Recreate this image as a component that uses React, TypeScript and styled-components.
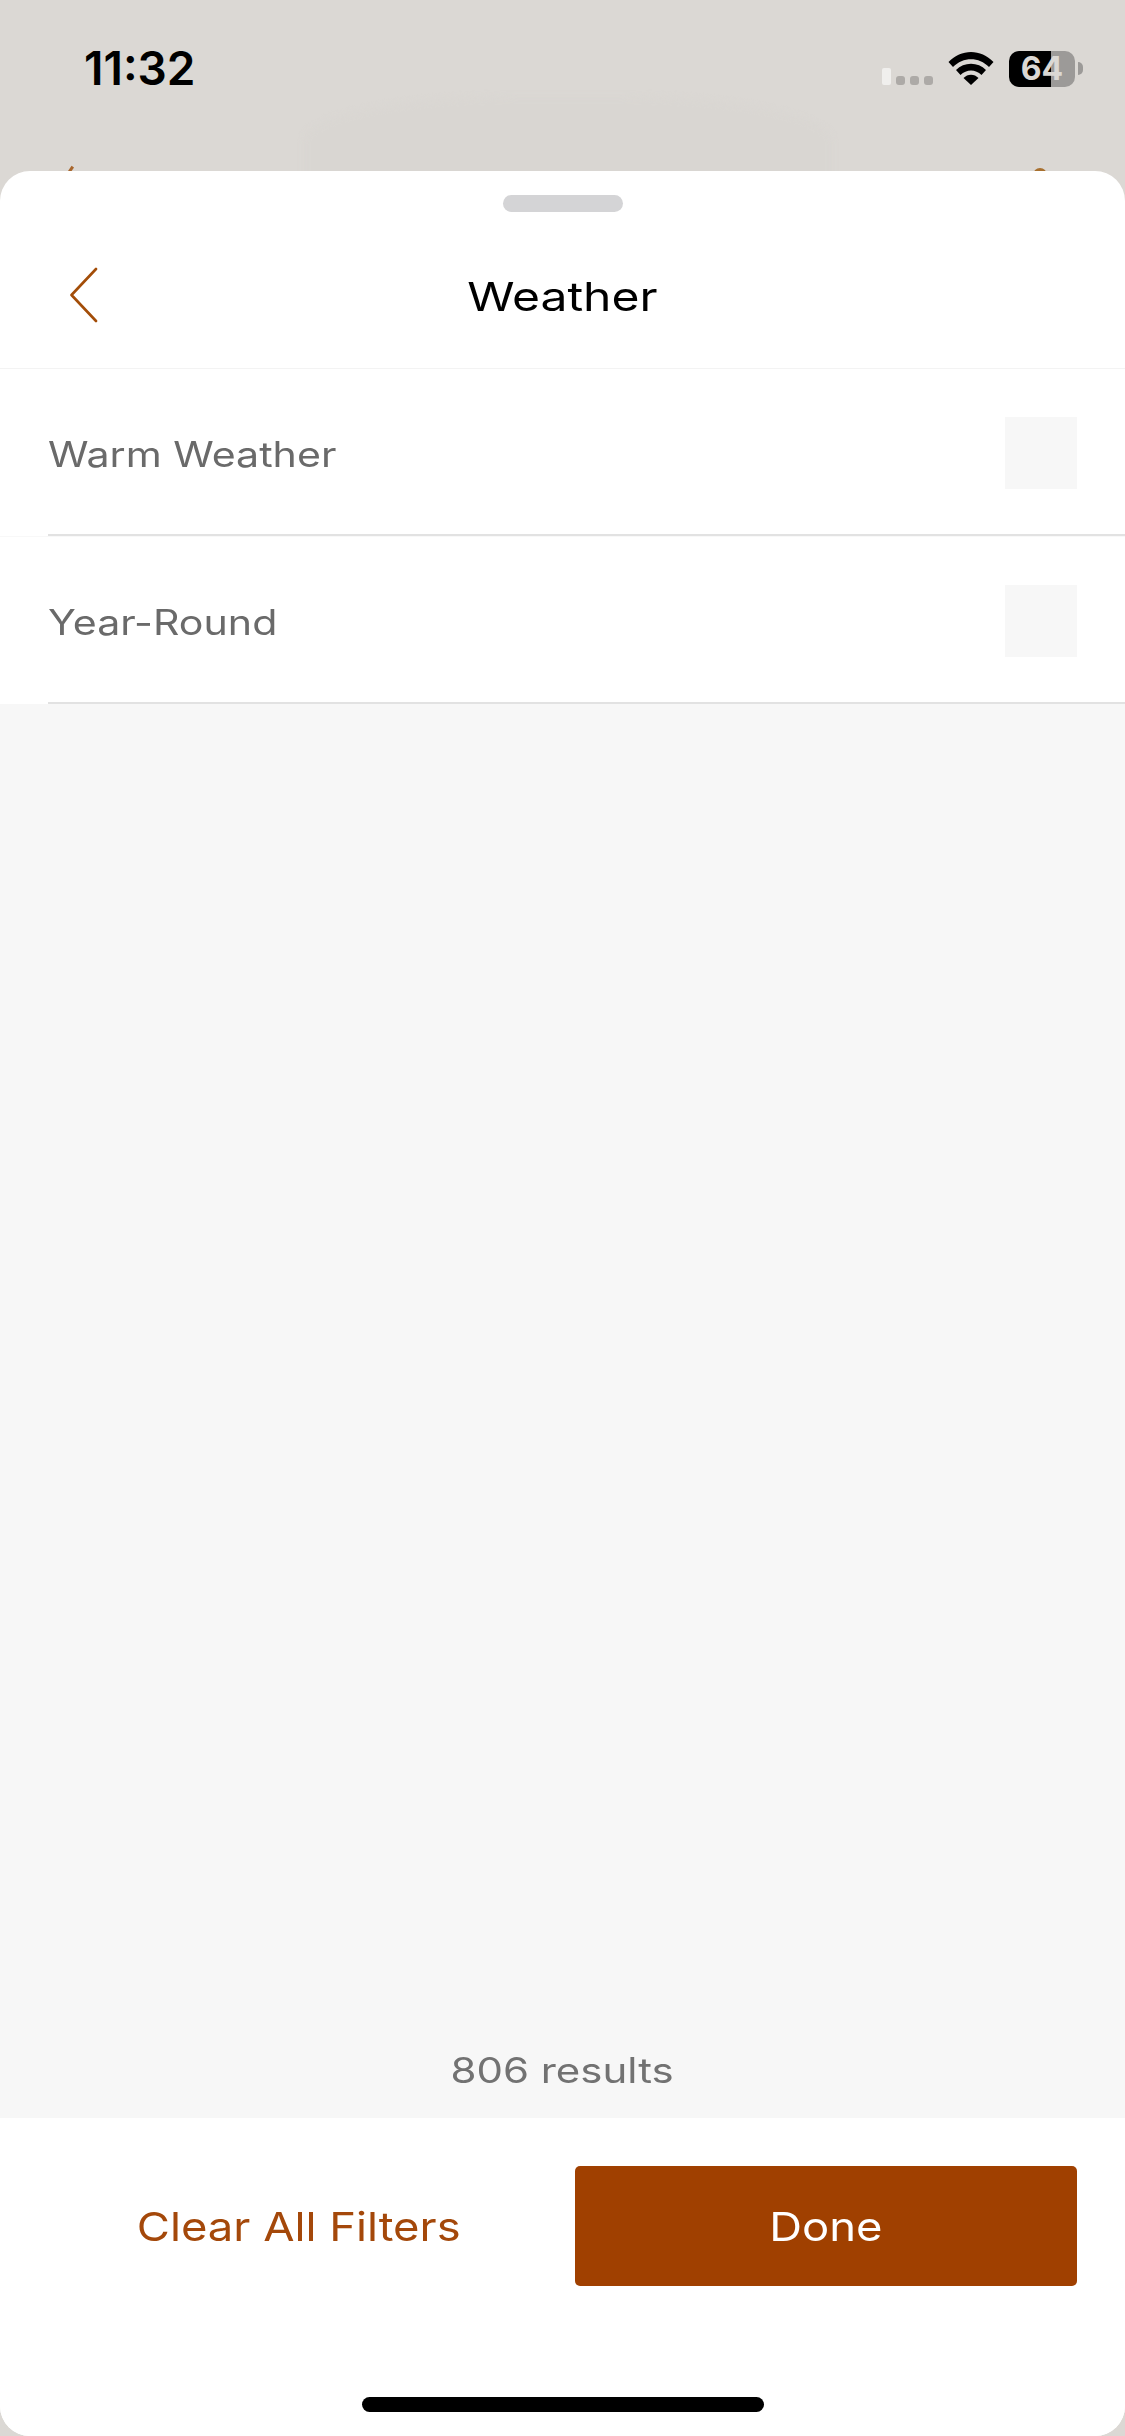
import {FC} from "react";
import styled, {createGlobalStyle} from "styled-components";

const ORANGE = "#a04000";
const FONT = `"Inter", "Liberation Sans", sans-serif`;

const options = ["Warm Weather", "Year-Round"];

const GlobalStyle = createGlobalStyle`
  html, body {
    margin: 0;
    padding: 0;
    background: #dbd8d4;
  }
  * {
    box-sizing: border-box;
  }
`

const WifiIcon: FC = () => (
    <svg width="46" height="34" viewBox="0 0 46 34">
        <path fill="#000" d="M0.5 11 C13 -2.5 33 -2.5 45.5 11 L41 16 C31 5.5 15 5.5 5 16 Z"/>
        <path fill="#000" d="M8 19 C16 10.5 30 10.5 38 19 L33.5 24 C27.5 18 18.5 18 12.5 24 Z"/>
        <path fill="#000" d="M15.5 27 C19.5 22.5 26.5 22.5 30.5 27 L23 34 Z"/>
    </svg>
)

const BackIcon: FC = () => (
    <svg width="28" height="56" viewBox="0 0 28 56" fill="none">
        <path d="M26 2 L1.5 28 L26 54" stroke="#a34d08" strokeWidth="2.6" strokeLinecap="round" strokeLinejoin="round"/>
    </svg>
)

const App: FC = () => {
    return (
        <Page>
            <GlobalStyle/>
            <BackdropBlob/>
            <BackdropChevron/>
            <BackdropDot/>
            <StatusBar>
                <Time>11:32</Time>
                <StatusIcons>
                    <Signal>
                        <SignalBar $active/>
                        <SignalBar/>
                        <SignalBar/>
                        <SignalBar/>
                    </Signal>
                    <WifiIcon/>
                    <Battery>
                        64
                        <BatteryCap/>
                    </Battery>
                </StatusIcons>
            </StatusBar>
            <Sheet>
                <GrabberRow>
                    <Grabber/>
                </GrabberRow>
                <Header>
                    <BackButton><BackIcon/></BackButton>
                    <Title>Weather</Title>
                </Header>
                <List>
                    {options.map(option => (
                        <Row key={option}>
                            <RowLabel>{option}</RowLabel>
                            <Checkbox/>
                        </Row>
                    ))}
                </List>
                <Content>
                    <Results>806 results</Results>
                </Content>
                <Footer>
                    <Actions>
                        <ClearButton><ActionLabel>Clear All Filters</ActionLabel></ClearButton>
                        <DoneButton><ActionLabel>Done</ActionLabel></DoneButton>
                    </Actions>
                    <HomeIndicator/>
                </Footer>
            </Sheet>
        </Page>
    )
}

export default App

const Page = styled.div`
  position: relative;
  width: 1125px;
  height: 2436px;
  overflow: hidden;
  display: flex;
  flex-direction: column;
  background: #dbd8d4;
  font-family: ${FONT};
`

const BackdropBlob = styled.div`
  position: absolute;
  left: 304px;
  top: 97px;
  width: 528px;
  height: 110px;
  border-radius: 40% 40% 0 0;
  background: #d9d6d2;
  filter: blur(3px);
`

const BackdropChevron = styled.div`
  position: absolute;
  left: 69px;
  top: 166px;
  width: 3px;
  height: 8px;
  background: #a8662c;
  transform: rotate(35deg);
`

const BackdropDot = styled.div`
  position: absolute;
  left: 1033px;
  top: 168px;
  width: 14px;
  height: 14px;
  border-radius: 50%;
  background: #a8702f;
`

const StatusBar = styled.div`
  position: relative;
  height: 171px;
  flex-shrink: 0;
  display: flex;
  justify-content: space-between;
  align-items: flex-start;
  padding: 46px 50px 0 84px;
`

const Time = styled.div`
  font-size: 46px;
  line-height: 44px;
  font-weight: 600;
  color: #000;
`

const StatusIcons = styled.div`
  display: flex;
  align-items: flex-start;
  gap: 15px;
  padding-top: 5px;
`

const Signal = styled.div`
  display: flex;
  align-items: flex-end;
  gap: 5px;
  height: 34px;
`

const SignalBar = styled.div<{$active?: boolean}>`
  width: 9px;
  height: ${({$active}) => $active ? 17 : 9}px;
  border-radius: ${({$active}) => $active ? 2 : 3}px;
  background: ${({$active}) => $active ? "#f0efed" : "#adaaa7"};
`

const Battery = styled.div`
  position: relative;
  width: 66px;
  height: 36px;
  border-radius: 10px;
  background: linear-gradient(to right, #000 0 42px, #9c9a98 42px 100%);
  color: #dbd8d4;
  font-size: 32px;
  line-height: 36px;
  font-weight: 700;
  text-align: center;
`

const BatteryCap = styled.div`
  position: absolute;
  right: -8px;
  top: 11px;
  width: 5px;
  height: 13px;
  border-radius: 0 6px 6px 0;
  background: #9c9a98;
`

const Sheet = styled.div`
  flex: 1;
  min-height: 0;
  position: relative;
  display: flex;
  flex-direction: column;
  background: #fff;
  border-radius: 30px;
  overflow: hidden;
`

const GrabberRow = styled.div`
  display: flex;
  justify-content: center;
  padding-top: 24px;
  height: 41px;
  flex-shrink: 0;
`

const Grabber = styled.div`
  width: 120px;
  height: 17px;
  border-radius: 9px;
  background: #d4d4d6;
`

const Header = styled.div`
  position: relative;
  height: 157px;
  flex-shrink: 0;
  display: flex;
  align-items: center;
  justify-content: center;
  border-bottom: 1px solid #f3f3f3;
`

const BackButton = styled.div`
  position: absolute;
  left: 70px;
  top: 55px;
  display: flex;
`

const Title = styled.h1`
  margin: 0;
  padding-top: 14px;
  font-size: 40px;
  line-height: 48px;
  font-weight: 400;
  color: #000;
  transform: scaleX(1.2);
`

const List = styled.div`
  flex-shrink: 0;
  display: flex;
  flex-direction: column;
  gap: 1px;
  background: #f8f8f8;
`

const Row = styled.div`
  height: 167px;
  padding: 0 48px;
  display: flex;
  align-items: center;
  justify-content: space-between;
  position: relative;
  background: #fff;

  &::after {
    content: "";
    position: absolute;
    left: 48px;
    right: 0;
    bottom: 0;
    height: 2px;
    background: #e2e2e2;
  }
`

const RowLabel = styled.div`
  padding-top: 2px;
  font-size: 35px;
  line-height: 42px;
  color: #6a6a6a;
  transform: scaleX(1.175);
  transform-origin: left center;
`

const Checkbox = styled.div`
  width: 72px;
  height: 72px;
  background: #f7f7f7;
`

const Content = styled.div`
  flex: 1;
  min-height: 0;
  display: flex;
  align-items: flex-end;
  justify-content: center;
  background: #f7f7f7;
  padding-bottom: 28px;
`

const Results = styled.div`
  font-size: 35px;
  line-height: 40px;
  color: #727272;
  transform: scaleX(1.2);
`

const Footer = styled.div`
  height: 318px;
  flex-shrink: 0;
  background: #fff;
  display: flex;
  flex-direction: column;
  align-items: center;
  padding-top: 48px;
`

const Actions = styled.div`
  align-self: stretch;
  display: flex;
  padding-right: 48px;
`

const ActionLabel = styled.span`
  display: block;
  transform: scaleX(1.135);
`

const ClearButton = styled.div`
  width: 575px;
  height: 120px;
  padding-left: 22px;
  display: flex;
  align-items: center;
  justify-content: center;
  font-size: 40px;
  color: #a4480a;
`

const DoneButton = styled.div`
  flex: 1;
  height: 120px;
  display: flex;
  align-items: center;
  justify-content: center;
  background: ${ORANGE};
  border-radius: 5px;
  font-size: 40px;
  color: #fff;
`

const HomeIndicator = styled.div`
  width: 402px;
  height: 15px;
  margin-top: 111px;
  border-radius: 8px;
  background: #000;
`
